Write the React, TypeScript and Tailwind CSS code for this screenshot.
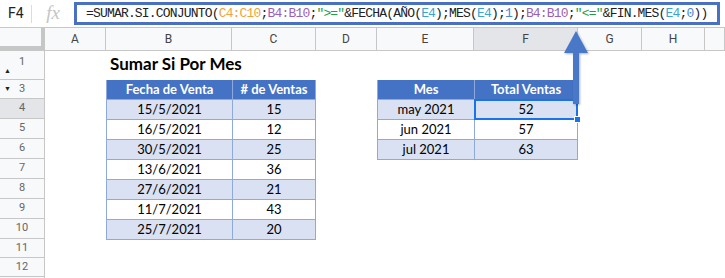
import React from 'react';

const cols = ['A', 'B', 'C', 'D', 'E', 'F', 'G', 'H', ''];

const ventas = [
  ['15/5/2021', '15'],
  ['16/5/2021', '12'],
  ['30/5/2021', '25'],
  ['13/6/2021', '36'],
  ['27/6/2021', '21'],
  ['11/7/2021', '43'],
  ['25/7/2021', '20'],
];

const totales = [
  ['may 2021', '52'],
  ['jun 2021', '57'],
  ['jul 2021', '63'],
];

// row number, height
const rows: [string, string][] = [
  ['1', 'h-[29px]'],
  ['3', 'h-[19px]'],
  ['4', 'h-[20px]'],
  ['5', 'h-[20px]'],
  ['6', 'h-[20px]'],
  ['7', 'h-[20px]'],
  ['8', 'h-[20px]'],
  ['9', 'h-[20px]'],
  ['10', 'h-[20px]'],
  ['11', 'h-[19px]'],
  ['12', 'h-[19px]'],
  ['', 'h-[19px]'],
];

const Formula = () => (
  <span>
    =SUMAR.SI.CONJUNTO(
    <span className="text-[#f0a33a]">C4:C10</span>;
    <span className="text-[#9a62b6]">B4:B10</span>;
    <span className="text-[#1e9e45]">"&gt;="</span>&amp;FECHA(AÑO(
    <span className="text-[#3aa6cf]">E4</span>);MES(
    <span className="text-[#3aa6cf]">E4</span>);
    <span className="text-[#4a86d6]">1</span>);
    <span className="text-[#9a62b6]">B4:B10</span>;
    <span className="text-[#1e9e45]">"&lt;="</span>&amp;FIN.MES(
    <span className="text-[#3aa6cf]">E4</span>;
    <span className="text-[#4a86d6]">0</span>))
  </span>
);

const Cell = ({ children, className = '' }: { children: React.ReactNode; className?: string }) => (
  <div className={`flex items-center justify-center border-[#8ea9db] ${className}`}>{children}</div>
);

const App = () => {
  return (
    <div
      className="relative w-[725px] h-[278px] overflow-hidden bg-white"
      style={{ fontFamily: 'Roboto, Arial, sans-serif' }}
    >
      {/* Barra de fórmulas */}
      <div className="flex h-[28px] items-center border-b border-[#c7c7c7]">
        <div className="w-[31px] pl-[8px] text-[14px] text-[#202124]">F4</div>
        <div className="h-[18px] w-px bg-[#dadce0]" />
        <div
          className="w-[42px] text-center text-[19px] italic text-[#c4c4c4]"
          style={{ fontFamily: '"Liberation Serif", serif' }}
        >
          fx
        </div>
        <div
          className="flex h-[23px] w-[646px] items-center border-[3px] border-[#4a70c4] pl-[9px] text-[13px] tracking-[-0.82px] text-[#202124] whitespace-nowrap"
          style={{ fontFamily: '"Liberation Mono", monospace' }}
        >
          <Formula />
        </div>
      </div>

      {/* Encabezados de columna */}
      <div className="grid h-[23px] grid-cols-[45px_61px_126px_84px_61px_97px_104px_64px_63px_20px] border-b border-[#c7c7c7] bg-[#f8f9fa] text-[12px] text-[#444]">
        <div className="border-r-4 border-b-4 border-[#c4c7c5]" />
        {cols.map((c, i) => (
          <div
            key={i}
            className={`flex items-center justify-center border-r border-[#c7c7c7] ${c === 'F' ? 'bg-[#e3e5e8]' : ''}`}
          >
            {c}
          </div>
        ))}
      </div>

      <div className="flex">
        {/* Números de fila */}
        <div className="w-[45px] shrink-0 border-r border-[#c7c7c7] bg-[#f8f9fa] text-[11px] text-[#666]">
          {rows.map(([n, h], i) => (
            <div
              key={i}
              className={`relative flex items-center justify-center border-b border-[#c7c7c7] ${h} ${n === '4' ? 'bg-[#e3e5e8]' : ''}`}
            >
              {n === '1' && <span className="absolute left-[4px] bottom-[3px] text-[7px] text-[#222]">▲</span>}
              {n === '3' && <span className="absolute left-[4px] top-[4px] text-[7px] text-[#222]">▼</span>}
              <span className={n === '1' ? 'pb-[6px]' : ''}>{n}</span>
            </div>
          ))}
        </div>

        {/* Área de celdas */}
        <div
          className="flex flex-col pl-[61px] text-[13px] text-black"
          style={{ fontFamily: 'Lato, "Open Sans", sans-serif' }}
        >
          <div className="flex h-[29px] items-end pb-[4px] pl-[4px] text-[17px] font-bold">Sumar Si Por Mes</div>

          <div className="flex items-start">
            {/* Tabla de ventas */}
            <div className="flex w-[210px] flex-col border border-t-0 border-[#8ea9db]">
              <div className="flex h-[19px] bg-[#4472c4] font-bold text-white">
                <Cell className="w-[126px] border-r">Fecha de Venta</Cell>
                <Cell className="flex-1"># de Ventas</Cell>
              </div>
              {ventas.map(([f, v], i) => (
                <div key={f} className={`flex h-[20px] border-t border-[#8ea9db] ${i % 2 === 0 ? 'bg-[#d9e1f2]' : 'bg-white'}`}>
                  <Cell className="w-[126px] border-r">{f}</Cell>
                  <Cell className="flex-1">{v}</Cell>
                </div>
              ))}
            </div>

            {/* Tabla de totales */}
            <div className="ml-[61px] flex w-[201px] flex-col border border-t-0 border-[#8ea9db]">
              <div className="flex h-[19px] bg-[#4472c4] font-bold text-white">
                <Cell className="w-[97px] border-r">Mes</Cell>
                <Cell className="flex-1">Total Ventas</Cell>
              </div>
              {totales.map(([m, t], i) => (
                <div key={m} className={`flex h-[20px] border-t border-[#8ea9db] ${i % 2 === 0 ? 'bg-[#d9e1f2]' : 'bg-white'}`}>
                  <Cell className="w-[97px] border-r">{m}</Cell>
                  <Cell className={`relative flex-1 ${i === 0 ? 'outline-2 -outline-offset-1 outline-[#1a73e8]' : ''}`}>
                    {t}
                    {i === 0 && (
                      <span className="absolute -right-[4px] -bottom-[4px] h-[7px] w-[7px] border border-white bg-[#1a73e8]" />
                    )}
                  </Cell>
                </div>
              ))}
            </div>
          </div>
        </div>
      </div>

      {/* Flecha */}
      <svg className="pointer-events-none absolute left-[560px] top-[28px]" width="32" height="82" viewBox="0 0 32 82">
        <defs>
          <filter id="sh" x="-30%" y="-10%" width="160%" height="130%">
            <feDropShadow dx="1" dy="1" stdDeviation="1" floodColor="#000" floodOpacity="0.3" />
          </filter>
        </defs>
        <path d="M16 3 L28 25 L19 25 L19 76 L13 76 L13 25 L4 25 Z" fill="#4a78c9" filter="url(#sh)" />
      </svg>
    </div>
  );
};

export default App;
